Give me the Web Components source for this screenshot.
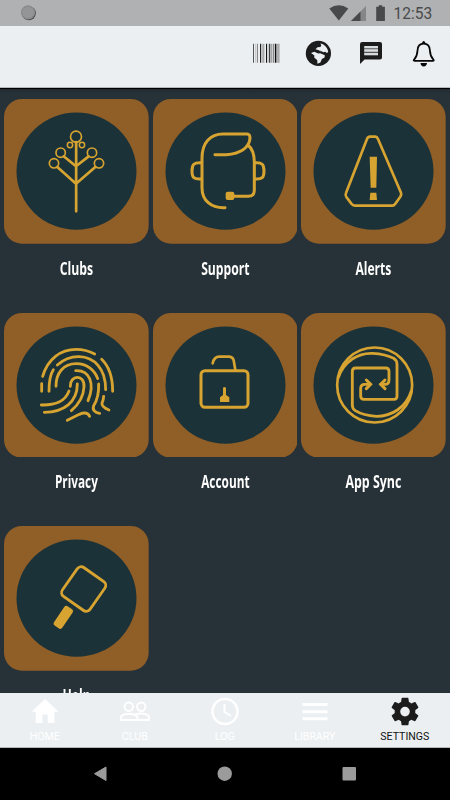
<!DOCTYPE html>
<html lang="en"><head><meta charset="utf-8"><title>Settings</title>
<style>html,body{margin:0;height:100%;background:#000}body{font-family:Roboto,sans-serif;overflow:hidden}</style></head>
<body>
<app-screen>
  <status-bar slot="status" time="12:53"></status-bar>
  <tool-bar slot="tools"></tool-bar>
  <menu-tile icon="clubs" width="33.5">Clubs</menu-tile>
  <menu-tile icon="support" width="48.5">Support</menu-tile>
  <menu-tile icon="alerts" width="36">Alerts</menu-tile>
  <menu-tile icon="privacy" width="43">Privacy</menu-tile>
  <menu-tile icon="account" width="48.5">Account</menu-tile>
  <menu-tile icon="sync" width="56">App Sync</menu-tile>
  <menu-tile icon="help" width="28">Help</menu-tile>
  <nav-item slot="nav" icon="home" width="30">HOME</nav-item>
  <nav-item slot="nav" icon="club" width="26">CLUB</nav-item>
  <nav-item slot="nav" icon="log" width="20">LOG</nav-item>
  <nav-item slot="nav" icon="library" width="41">LIBRARY</nav-item>
  <nav-item slot="nav" icon="settings" width="49" active>SETTINGS</nav-item>
  <system-bar slot="system"></system-bar>
</app-screen>
<script>
const attach = (el, html) => { el.attachShadow({mode:'open'}).innerHTML = html; };

customElements.define('app-screen', class extends HTMLElement {
  constructor(){ super(); attach(this, `<style>
    :host{display:flex;flex-direction:column;width:450px;height:800px;overflow:hidden;background:#273238}
    main{flex:1;min-height:0;overflow:hidden;box-sizing:border-box;padding:10.3px 0 0 4px;display:grid;
      grid-template-columns:repeat(3,144.67px);column-gap:3.95px;grid-auto-rows:213.3px;align-content:start;
      border-top:1px solid #000;background:linear-gradient(#202a30,#273238 5px)}
    nav{display:grid;grid-template-columns:repeat(5,1fr);height:54.5px;flex:none;background:#ebeff2;border-bottom:1px solid #b6b9bb;box-sizing:border-box}
  </style><slot name="status"></slot><slot name="tools"></slot><main><slot></slot></main><nav><slot name="nav"></slot></nav><slot name="system"></slot>`); }
});

customElements.define('status-bar', class extends HTMLElement {
  constructor(){ super(); attach(this, `<style>
    :host{display:block;height:26px;flex:none;background:#b0b1b3}svg{display:block}text{font:400 15.6px Roboto,sans-serif;fill:#48494a}
  </style><svg width="450" height="26" viewBox="0 0 450 26">
    <circle cx="28.8" cy="13.3" r="7" fill="#454648"/><circle cx="28" cy="12.4" r="7.1" fill="#949597"/>
    <circle cx="28" cy="12.4" r="6.2" fill="none" stroke="#808183" stroke-width="1.2" stroke-dasharray="1 1"/>
    <path d="M329.3 8.5Q338.8 2 348.3 8.5L338.8 20.5Z" fill="#48494a"/>
    <path d="M366 6V21H351Z" fill="#858688"/><path d="M360.5 11.5V21H351Z" fill="#48494a"/>
    <path d="M376.2 6.8H378.7V5.2H382.2V6.8H384.9V21H376.2Z" fill="#48494a"/>
    <text x="393.6" y="18.9" textLength="38.6" lengthAdjust="spacingAndGlyphs">${this.getAttribute('time')}</text></svg>`); }
});

customElements.define('tool-bar', class extends HTMLElement {
  constructor(){ super();
    const bars = [[253,1,'#555'],[255.5,.7,'#aaa'],[257,1,'#888'],[260,1.2,'#222'],[262.2,2.2,'#aaa'],[266,1,'#111'],[267.7,.7,'#999'],[269.1,1.2,'#333'],[271.3,1,'#888'],[273,1.4,'#888'],[275,1,'#111'],[276.4,1,'#555'],[278,1.6,'#aaa']]
      .map(([x,w,c])=>`<path fill="${c}" d="M${x} 43.8h${w}v19h-${w}z"/>`).join('');
    attach(this, `<style>:host{display:block;height:61px;flex:none;background:#ebeff2;border-bottom:1px solid #b5b9bb}svg{display:block}</style>
    <svg width="450" height="61" viewBox="0 26 450 61" fill="#1c1c1c">${bars}
    <circle cx="318.4" cy="53.4" r="12.6"/>
    <g fill="#ebeff2"><path d="M320.3 43.5C321.5 43.6 323 44.3 324.3 45.2C326.8 47.1 328 49.8 328.2 52L326.8 53.1L325.2 51.8L323.3 52.2L321.6 51.2L319.3 51.4L318.2 50L315.5 49.2L317.5 47.3L320.5 47L321.3 45.2Z"/>
    <path d="M311 53L314.3 51.7L318.2 53.5L320.2 53.2L324.8 55.2L324.6 57.4L321.9 59L320.4 62.4L317.4 63.7L317.3 60.3L314.2 57.6L314.4 55.6Z"/>
    <path d="M314.5 51.1L316.3 49.9L321.3 50.9L319 52.2Z" fill="#1c1c1c"/></g>
    <path d="M362.2 42H380Q382 42 382 44V57.5Q382 59.5 380 59.5H364.6L360 64V44.2Q360 42 362.2 42Z"/>
    <rect x="364.2" y="46" width="13.8" height="9.3" fill="#d9dcde"/><path d="M364 48.2h14v1.1h-14zM364 51.8h14v1.1h-14z" fill="#555"/>
    <path d="M423.7 43.6C419.3 43.6 417.6 47 417.5 50.5C417.3 55.2 416.8 56.6 414.3 59.4Q413 60.8 414.5 60.8H433Q434.5 60.8 433.2 59.4C430.6 56.6 430.1 55.2 429.9 50.5C429.8 47 428.1 43.6 423.7 43.6Z" fill="none" stroke="#080808" stroke-width="1.8"/>
    <path d="M422 43.6Q422 41 423.7 41T425.4 43.6ZM420.5 63H427Q426.6 66.4 423.7 66.4T420.5 63Z" fill="#080808"/></svg>`); }
});

/* Icon artwork: origin of the tile inside the drawing plus the strokes. */
const ART = {
 clubs:{o:[12,22],s:`<g stroke-width="8"><path d="M228.500 151V359M228 224L191 194M228 224L266 194M228 276L172 226M228 276L286 226"/></g>
   <g stroke-width="5"><circle cx="228" cy="135" r="16.500"/><circle cx="182" cy="183" r="14"/><circle cx="276" cy="183" r="14"/><circle cx="162" cy="215" r="14"/><circle cx="297" cy="215" r="14"/><g stroke-width="4.500"><circle cx="210" cy="160" r="8"/><circle cx="246" cy="160" r="8"/></g></g>`},
 support:{o:[8,22],s:`<path stroke-width="9" d="M224 348C182 350 155 326 155 288V200C155 153 180 127 218 127H290Q303 128 297 150C287 178 250 192 194 189M293 160C306 171 312 188 312 211V296Q312 314 294 314H246M151 213C131 212 125 218 125 238S131 263 151 262M316 213C335 212 341 218 341 238S335 263 316 262"/><rect x="226" y="300" width="26" height="25" rx="6" fill="#d8a431" stroke="none"/>`},
 alerts:{o:[10,22],s:`<path stroke-width="8" d="M217 135H233Q238 135 241 142L310 303Q312 309 308 315L293 336Q289 342 284 342H171Q166 342 161 336L146 316Q142 311 145 304L208 142Q211 135 217 135Z"/><path fill="#d8a431" stroke="none" d="M216 195H238L236 288H219ZM218 303H236L238 325H216Z"/>`},
 privacy:{o:[12,24],s:`<path stroke-width="8.500" d="M128 214C143 162 182 133 228 133Q258 133 284 147M305 163Q338 195 338 259M125 236V259M147 259C147 228 150 209 160 194M172 180C211 145 266 148 294 181Q317 207 317 254M168 244C168 204 190 176 229 176C260 176 284 194 293 221M227 197C268 195 286 234 264 287M211 244C209 210 255 206 252 246Q250 286 214 317M232 237C232 291 192 321 133 322M207 258C195 290 168 301 124 300M296 237C297 272 290 288 281 302C276 315 285 323 299 325M311 274Q311 283 306 295Q304 306 327 315M202 346L238 328Q261 318 269 334"/>`},
 account:{o:[8,24],s:`<rect x="152" y="197" width="141" height="110" rx="12" stroke-width="9"/><path stroke-width="8" d="M187 175Q191 155 207 155H235Q247 155 250 166L255 195"/><path fill="#d8a431" stroke="none" d="M218 249Q222 243 227 249V270L237 277V291H209V277L218 270Z"/>`},
 sync:{o:[10,24],s:`<circle cx="231" cy="240" r="112.500" stroke-width="8"/><path stroke-width="8.500" d="M122 218C137 170 181 143 225 145Q264 147 288 160Q298 166 298 179V274Q298 283 289 283H199Q189 283 189 273V251Q189 238 201 238H217M341 258C325 309 281 334 236 334Q197 332 173 317Q164 311 164 300V199Q164 189 174 189H264Q274 189 274 199V225Q274 238 262 238H249"/><path stroke-width="9" stroke-linejoin="miter" d="M206 225L219 238L206 251M262 225L249 238L262 251"/>`},
 help:{o:[12,17],s:`<rect x="196" y="152" width="110" height="108" rx="15" transform="translate(251 206) rotate(35) scale(.92 .98) translate(-251 -206)" stroke-width="9"/><rect x="175" y="256" width="30" height="70" rx="7" transform="rotate(34 190 291)" fill="#d8a431" stroke="none"/>`}
};

customElements.define('menu-tile', class extends HTMLElement {
  connectedCallback(){ if(this.shadowRoot) return;
    const a = ART[this.getAttribute('icon')], w = +this.getAttribute('width'), t = this.textContent.trim();
    attach(this, `<style>:host{display:flex;flex-direction:column;min-width:0}svg{display:block}.art{width:144.67px;height:144.67px}
      text{font:700 17.3px "Open Sans","Noto Sans",sans-serif;fill:#fff}.label{filter:drop-shadow(.7px .7px .6px #10181c)}</style>
    <svg class="art" viewBox="0 0 434 434"><rect width="434" height="434" rx="54" fill="#905e27"/><ellipse cx="217.500" cy="216.500" rx="180" ry="176" fill="#1b3338"/>
    <g transform="translate(${-a.o[0]} ${-a.o[1]})" fill="none" stroke="#d8a431" stroke-linecap="round" stroke-linejoin="round">${a.s}</g></svg>
    <svg class="label" width="144.67" height="45"><text x="${72.4-w/2}" y="30.7" textLength="${w}" lengthAdjust="spacingAndGlyphs">${t}</text></svg>`); }
});

const NAV = {
 home:`<path transform="translate(29 1.700) scale(1.34 1.420)" d="M10 20v-6h4v6h5v-8h3L12 3 2 12h3v8z"/>`,
 club:`<g fill="none" stroke="#fff" stroke-width="2"><circle cx="38.800" cy="13.700" r="4.200"/><circle cx="51.300" cy="13.700" r="4.200"/><path d="M31 27V24.500C31 20 45 20 47.500 24V27ZM47.500 27H59V24.500C59 20.500 51 19.800 45 21.500"/></g>`,
 log:`<circle cx="45" cy="18.500" r="12.500" fill="none" stroke="#fff" stroke-width="2.400"/><path d="M44.500 11V19L51 23" fill="none" stroke="#fff" stroke-width="2"/>`,
 library:`<path d="M32.500 10h25v3h-25zM32.500 17.200h25v3h-25zM32.500 24.300h25v3h-25z"/>`,
 settings:`<path transform="translate(28.500 2.100) scale(1.375)" d="M19.430 12.980c.04-.32.07-.64.07-.98s-.03-.66-.07-.98l2.110-1.650c.19-.15.24-.42.12-.64l-2-3.460c-.12-.22-.39-.3-.61-.22l-2.490 1c-.52-.4-1.080-.73-1.690-.98l-.38-2.650C14.460 2.180 14.250 2 14 2h-4c-.25 0-.46.18-.49.42l-.38 2.650c-.61.25-1.170.59-1.690.98l-2.490-1c-.23-.09-.49 0-.61.22l-2 3.460c-.13.22-.07.49.12.64l2.110 1.650c-.04.32-.07.65-.07.98s.03.66.07.98l-2.110 1.650c-.19.15-.24.42-.12.64l2 3.460c.12.22.39.3.61.22l2.490-1c.52.4 1.080.73 1.690.98l.38 2.650c.03.24.24.42.49.42h4c.25 0 .46-.18.49-.42l.38-2.650c.61-.25 1.170-.59 1.690-.98l2.490 1c.23.09.49 0 .61-.22l2-3.460c.12-.22.07-.49-.12-.64zM12 15.500a3.500 3.500 0 1 1 0-7 3.500 3.500 0 0 1 0 7z"/>`
};
customElements.define('nav-item', class extends HTMLElement {
  connectedCallback(){ if(this.shadowRoot) return;
    const w = +this.getAttribute('width');
    attach(this, `<style>:host{display:block}:host([active]){--c:#1c1c1c}svg{display:block;fill:var(--c,#fff)}text{font:400 11.800px Roboto,sans-serif}:host([active]) text{fill:#111}</style>
    <svg width="90" height="53" viewBox="0 0 90 53">${NAV[this.getAttribute('icon')]}<text x="${44.8-w/2}" y="47.200" textLength="${w}" lengthAdjust="spacingAndGlyphs">${this.textContent.trim()}</text></svg>`); }
});

customElements.define('system-bar', class extends HTMLElement {
  constructor(){ super(); attach(this, `<style>:host{display:block;height:52.500px;flex:none;background:#000}svg{display:block}</style>
   <svg width="450" height="52" viewBox="0 748 450 52" fill="#9b9b9b"><path d="M94.500 773.700L106 767V780.500Z" stroke="#9b9b9b" stroke-linejoin="round"/><circle cx="224.700" cy="773.700" r="7.200"/><rect x="342.500" y="767" width="13.500" height="13.500" rx="1"/></svg>`); }
});
</script></body></html>
